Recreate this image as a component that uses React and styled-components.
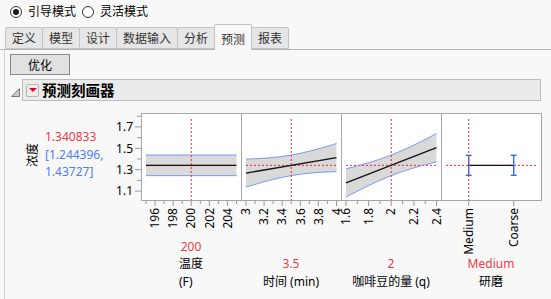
import React from 'react';
import styled, { createGlobalStyle } from 'styled-components';

const GlobalStyle = createGlobalStyle`
  html, body {
    margin: 0;
    padding: 0;
    background: #f8f8f8;
  }
  body {
    font-family: "Noto Sans", "Noto Sans CJK SC", sans-serif;
    font-size: 12px;
    color: #000;
  }
`;

const Page = styled.div`
  width: 551px;
  height: 299px;
  overflow: hidden;
`;

const RadioRow = styled.div`
  height: 24px;
  display: flex;
  align-items: center;
  padding-left: 10px;
  gap: 6px;
`;

const RadioDot = styled.span`
  width: 12px;
  height: 12px;
  box-sizing: border-box;
  border-radius: 50%;
  border: 1px solid #333;
  background: #fff;
  display: flex;
  align-items: center;
  justify-content: center;

  &::after {
    content: '';
    width: 6px;
    height: 6px;
    border-radius: 50%;
    background: ${p => (p.checked ? '#1a1a1a' : 'transparent')};
  }
`;

const RadioLabel = styled.span`
  line-height: 14px;
  margin-right: 0;
`;

const TabStrip = styled.div`
  height: 25px;
  display: flex;
  align-items: flex-end;
  padding-left: 5px;
  border-bottom: 1px solid #b4b4b4;
`;

const Tab = styled.div`
  box-sizing: border-box;
  height: ${p => (p.active ? '26px' : '22px')};
  padding: ${p => (p.active ? '3px 6px 0' : '0 6px')};
  margin-bottom: ${p => (p.active ? '-1px' : '0')};
  margin-right: -1px;
  display: flex;
  align-items: center;
  background: ${p => (p.active ? '#f8f8f8' : '#e6e6e6')};
  border: 1px solid #c4c4c4;
  border-bottom: ${p => (p.active ? 'none' : '1px solid #c4c4c4')};
  border-radius: 2px 2px 0 0;
  color: #333;
  position: relative;
  z-index: ${p => (p.active ? 1 : 0)};
`;

const Panel = styled.div`
  margin-left: 4px;
  border-left: 1px solid #cfcfcf;
  padding: 4px 10px 0 5px;
  height: 250px;
`;

const ActionButton = styled.button`
  width: 60px;
  height: 21px;
  padding: 0;
  border: 1px solid #8a8a8a;
  background: #e1e1e1;
  font: inherit;
  color: #000;
  display: block;
`;

const OutlineRow = styled.div`
  margin-top: 4px;
  display: flex;
  align-items: center;
  gap: 2px;
`;

const Disclosure = styled.svg`
  width: 9px;
  height: 22px;
  margin-left: 1px;
`;

const OutlineBox = styled.div`
  flex: 1;
  box-sizing: border-box;
  height: 22px;
  background: #ebebeb;
  border: 1px solid #bdbdbd;
  display: flex;
  align-items: center;
  padding-left: 3px;
  gap: 3px;
`;

const MenuButton = styled.span`
  width: 13px;
  height: 13px;
  box-sizing: border-box;
  border: 1px solid #b5b5b5;
  border-radius: 2px;
  background: #ececec;
  display: flex;
  align-items: center;
  justify-content: center;

  &::after {
    content: '';
    border-left: 4px solid transparent;
    border-right: 4px solid transparent;
    border-top: 4px solid #d0101e;
  }
`;

const OutlineTitle = styled.span`
  font-size: 14.5px;
  font-weight: bold;
  line-height: 18px;
`;

const Profiler = styled.div`
  margin-top: 12px;
  display: flex;
  align-items: flex-start;
`;

const ResponseColumn = styled.div`
  width: 131px;
  height: 88px;
  box-sizing: border-box;
  padding-left: 17px;
  display: flex;
  align-items: center;
`;

const ResponseName = styled.div`
  writing-mode: vertical-rl;
  text-orientation: sideways;
  transform: rotate(180deg);
  line-height: 12px;
  margin-top: -4px;
`;

const ResponseValues = styled.div`
  margin-left: 6px;
  margin-top: -5px;
  line-height: 17.4px;
  white-space: nowrap;
  width: 60px;
`;

const ValueLine = styled.div`
  color: ${p => (p.tone === 'blue' ? '#4f7ef0' : '#ef3b49')};
`;

const YAxis = styled.svg`
  margin-left: auto;
  width: 32px;
  height: 88px;
  overflow: visible;
`;

const FactorColumn = styled.div`
  width: 100px;
  height: 177px;
  display: flex;
  flex-direction: column;
`;

const PlotSvg = styled.svg`
  width: 101px;
  height: 88px;
  flex-shrink: 0;
  display: block;
`;

const AxisSvg = styled.svg`
  width: 100px;
  flex-shrink: 0;
  display: block;
  overflow: visible;
`;

const FactorLabels = styled.div`
  margin-top: auto;
  text-align: center;
  line-height: 17.5px;
`;

const CurrentValue = styled.div`
  color: #ef3b49;
`;

const FactorName = styled.div`
  display: inline-block;
  text-align: left;
  white-space: nowrap;
`;

const Y0 = 56.7;
const yOf = v => Y0 - (v - 1.3) * 107;
const MEAN_Y = yOf(1.340833);
const RED = '#e3283c';
const CI_BLUE = '#7499ee';

const factors = [
  {
    name: ['温度', '(F)'],
    value: '200',
    min: 195, max: 205, current: 200,
    ticks: [196, 198, 200, 202, 204],
    minor: [195, 197, 199, 201, 203, 205],
    slope: 0, curve: 0,
  },
  {
    name: ['时间 (min)'],
    value: '3.5',
    min: 3, max: 4, current: 3.5,
    ticks: [3, 3.2, 3.4, 3.6, 3.8, 4],
    minor: [3.1, 3.3, 3.5, 3.7, 3.9],
    slope: -15.6, curve: 366,
  },
  {
    name: ['咖啡豆的量 (q)'],
    value: '2',
    min: 1.6, max: 2.4, current: 2,
    ticks: [1.6, 1.8, 2, 2.2, 2.4],
    minor: [1.7, 1.9, 2.1, 2.3],
    slope: -44.1, curve: 597,
  },
];

const HW0 = 10.3;

const NumericPlot = ({ f }) => {
  const px = v => 5 + ((v - f.min) / (f.max - f.min)) * 90.5;
  const pts = [];
  for (let i = 0; i <= 24; i++) {
    const v = f.min + ((f.max - f.min) * i) / 24;
    const d = v - f.current;
    const m = MEAN_Y + f.slope * d;
    const hw = Math.sqrt(HW0 * HW0 + f.curve * d * d);
    pts.push({ x: px(v), m, up: m - hw, lo: m + hw });
  }
  const upper = pts.map(p => `${p.x},${p.up}`).join(' ');
  const lower = pts.map(p => `${p.x},${p.lo}`).join(' ');
  const band = upper + ' ' + pts.slice().reverse().map(p => `${p.x},${p.lo}`).join(' ');
  const cx = px(f.current);
  return (
    <PlotSvg viewBox="0 0 101 88">
      <rect x="0.5" y="0.5" width="100" height="87" fill="#fff" stroke="#a6a6a6" />
      <polygon points={band} fill="#d9d9d9" />
      <line x1={px(f.min)} x2={px(f.max)} y1={MEAN_Y} y2={MEAN_Y} stroke={RED} strokeDasharray="2 2" />
      <polyline points={upper} fill="none" stroke={CI_BLUE} />
      <polyline points={lower} fill="none" stroke={CI_BLUE} />
      <line x1={pts[0].x} y1={pts[0].m} x2={pts[24].x} y2={pts[24].m} stroke="#111" strokeWidth="1.3" />
      <line x1={cx} x2={cx} y1="6" y2="87" stroke={RED} strokeDasharray="2 2" />
    </PlotSvg>
  );
};

const NumericAxis = ({ f }) => {
  const px = v => 5 + ((v - f.min) / (f.max - f.min)) * 90.5;
  return (
    <AxisSvg height="36" viewBox="0 0 100 36">
      {f.minor.map(v => (
        <line key={'m' + v} x1={px(v)} x2={px(v)} y1="0" y2="3" stroke="#999" />
      ))}
      {f.ticks.map(v => (
        <g key={v}>
          <line x1={px(v)} x2={px(v)} y1="0" y2="5" stroke="#999" />
          <text
            x={px(v)}
            y="7"
            dy="0.35em"
            textAnchor="end"
            fontSize="12"
            fontFamily="Noto Sans, sans-serif"
            transform={`rotate(-90 ${px(v)} 7)`}
          >
            {v}
          </text>
        </g>
      ))}
    </AxisSvg>
  );
};

const levels = [
  { label: 'Medium', x: 27.7 },
  { label: 'Coarse', x: 72.7 },
];

const CategoryPlot = () => (
  <PlotSvg viewBox="0 0 101 88">
    <rect x="0.5" y="0.5" width="100" height="87" fill="#fff" stroke="#a6a6a6" />
    <line x1="5" x2="96" y1={MEAN_Y} y2={MEAN_Y} stroke={RED} strokeDasharray="2 2" />
    <line x1={levels[0].x} x2={levels[1].x} y1={MEAN_Y} y2={MEAN_Y} stroke="#111" strokeWidth="1.3" />
    {levels.map(l => (
      <g key={l.label} stroke="#2f6ce8" strokeWidth="1.4">
        <line x1={l.x} x2={l.x} y1={MEAN_Y - 10} y2={MEAN_Y + 10} />
        <line x1={l.x - 3} x2={l.x + 3} y1={MEAN_Y - 10} y2={MEAN_Y - 10} />
        <line x1={l.x - 3} x2={l.x + 3} y1={MEAN_Y + 10} y2={MEAN_Y + 10} />
      </g>
    ))}
    <line x1={levels[0].x} x2={levels[0].x} y1="6" y2="87" stroke={RED} strokeDasharray="2 2" />
  </PlotSvg>
);

const CategoryAxis = () => (
  <AxisSvg height="53" viewBox="0 0 100 53">
    {levels.map(l => (
      <g key={l.label}>
        <line x1={l.x} x2={l.x} y1="0" y2="5" stroke="#999" />
        <text
          x={l.x}
          y="7"
          dy="0.35em"
          textAnchor="end"
          fontSize="12"
          fontFamily="Noto Sans, sans-serif"
          transform={`rotate(-90 ${l.x} 7)`}
        >
          {l.label}
        </text>
      </g>
    ))}
  </AxisSvg>
);

const yTicks = [1.1, 1.3, 1.5, 1.7];
const yMinor = [1.2, 1.4, 1.6, 1.8];

const ResponseAxis = () => (
  <YAxis viewBox="0 0 32 88">
    {yMinor.map(v => (
      <line key={v} x1="28" x2="32" y1={yOf(v)} y2={yOf(v)} stroke="#999" />
    ))}
    {yTicks.map(v => (
      <g key={v}>
        <line x1="26" x2="32" y1={yOf(v)} y2={yOf(v)} stroke="#999" />
        <text x="24" y={yOf(v)} dy="0.35em" textAnchor="end" fontSize="12" fontFamily="Noto Sans, sans-serif">
          {v.toFixed(1)}
        </text>
      </g>
    ))}
  </YAxis>
);

const tabs = ['定义', '模型', '设计', '数据输入', '分析', '预测', '报表'];

const App = () => {
  return (
    <Page>
      <GlobalStyle />
      <RadioRow>
        <RadioDot checked />
        <RadioLabel>引导模式</RadioLabel>
        <RadioDot />
        <RadioLabel>灵活模式</RadioLabel>
      </RadioRow>
      <TabStrip>
        {tabs.map(t => (
          <Tab key={t} active={t === '预测'}>{t}</Tab>
        ))}
      </TabStrip>
      <Panel>
        <ActionButton>优化</ActionButton>
        <OutlineRow>
          <Disclosure viewBox="0 0 9 22">
            <polygon points="8.5,9.5 8.5,17.5 0.5,17.5" fill="#c8c8c8" stroke="#7a7a7a" />
          </Disclosure>
          <OutlineBox>
            <MenuButton />
            <OutlineTitle>预测刻画器</OutlineTitle>
          </OutlineBox>
        </OutlineRow>
        <Profiler>
          <ResponseColumn>
            <ResponseName>浓度</ResponseName>
            <ResponseValues>
              <ValueLine>1.340833</ValueLine>
              <ValueLine tone="blue">[1.244396,</ValueLine>
              <ValueLine tone="blue">1.43727]</ValueLine>
            </ResponseValues>
            <ResponseAxis />
          </ResponseColumn>
          {factors.map(f => (
            <FactorColumn key={f.value}>
              <NumericPlot f={f} />
              <NumericAxis f={f} />
              <FactorLabels>
                <CurrentValue>{f.value}</CurrentValue>
                <FactorName>
                  {f.name.map(n => (
                    <div key={n}>{n}</div>
                  ))}
                </FactorName>
              </FactorLabels>
            </FactorColumn>
          ))}
          <FactorColumn>
            <CategoryPlot />
            <CategoryAxis />
            <FactorLabels>
              <CurrentValue>Medium</CurrentValue>
              <FactorName>研磨</FactorName>
            </FactorLabels>
          </FactorColumn>
        </Profiler>
      </Panel>
    </Page>
  );
};

export default App;
